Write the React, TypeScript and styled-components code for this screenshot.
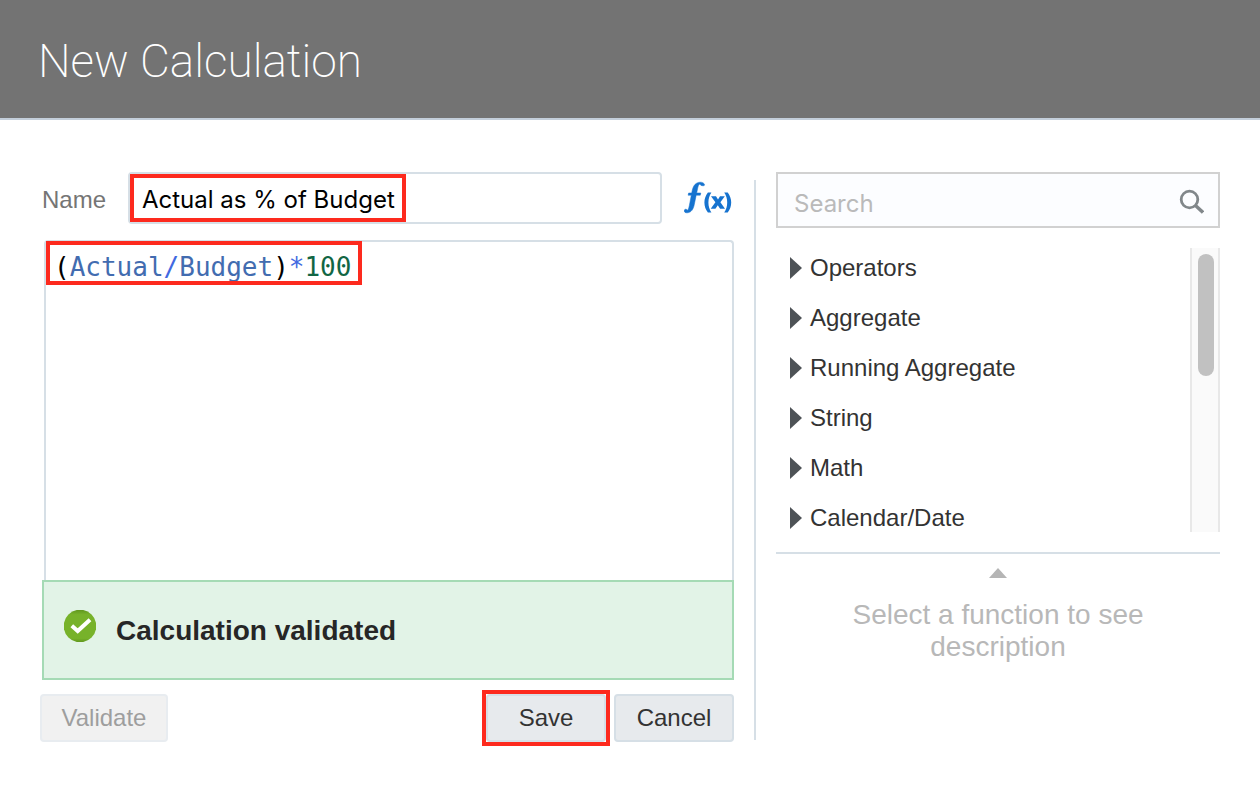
import React, { useState } from 'react';
import styled, { createGlobalStyle, css } from 'styled-components';

const GlobalStyle = createGlobalStyle`
  *, *::before, *::after { box-sizing: border-box; }
  body {
    margin: 0;
    background: #fff;
    color: #333;
    font-family: "Helvetica Neue", "Liberation Sans", Arial, sans-serif;
    font-size: 24px;
    line-height: 32px;
  }
  button, input, textarea { font: inherit; margin: 0; }
`;

const line = '#d6dfe6';

const Header = styled.header`
  display: flex;
  align-items: center;
  min-height: 120px;
  padding: 4px 38px 0;
  background: #737373;
  border-bottom: 2px solid #c3ceda;
`;

const Title = styled.h1`
  margin: 0;
  color: #fff;
  font-family: Roboto, sans-serif;
  font-size: 46px;
  font-weight: 200;
  line-height: 56px;
`;

const Body = styled.main`
  display: grid;
  grid-template-columns: minmax(0, 1fr) 2px minmax(0, 444px);
  column-gap: 20px;
  padding: 52px 40px 40px;
`;

const Divider = styled.div`
  margin: 8px 0 2px;
  background: ${line};
`;

const EditorPane = styled.form`
  display: flex;
  flex-direction: column;
`;

const NameRow = styled.div`
  display: flex;
  align-items: center;
  height: 52px;
  padding-left: 2px;
`;

const NameLabel = styled.label`
  width: 86px;
  padding-top: 4px;
  color: #757575;
`;

const NameField = styled.div`
  position: relative;
  flex: 1;
`;

const NameInput = styled.input`
  display: block;
  width: 100%;
  height: 52px;
  padding: 2px 12px 0;
  border: 2px solid ${line};
  border-radius: 4px;
  background: #fff;
  color: #000;
  font-family: Inter, sans-serif;
  font-size: 24px;
  outline: none;
`;

const Highlight = styled.span<{ $area: 'name' | 'formula' | 'save' }>`
  position: absolute;
  border: 4px solid #fd2a1e;
  pointer-events: none;
  ${({ $area }) => $area === 'name' && css`inset: 2px auto 2px 2px; width: 276px;`}
  ${({ $area }) => $area === 'formula' && css`top: -1px; left: 0; width: 316px; height: 44px;`}
  ${({ $area }) => $area === 'save' && css`inset: -4px;`}
`;

const FunctionButton = styled.button`
  display: flex;
  justify-content: flex-end;
  width: 72px;
  padding: 2px 2px 0 0;
  border: 0;
  background: none;
  cursor: pointer;
`;

const FormulaBox = styled.div`
  position: relative;
  min-height: 340px;
  margin: 16px 0 0 4px;
  border: 2px solid ${line};
  border-bottom: 0;
  border-radius: 4px 4px 0 0;
`;

const Formula = styled.code`
  display: block;
  padding: 6px 8px;
  color: #000;
  font-family: "DejaVu Sans Mono", monospace;
  font-size: 26px;
  line-height: 38px;
  outline: none;
`;

const Token = styled.span<{ $kind: 'column' | 'operator' | 'number' }>`
  color: ${({ $kind }) => ({ column: '#426cb0', operator: '#4169e1', number: '#116644' })[$kind]};
`;

const Message = styled.div`
  display: flex;
  align-items: center;
  gap: 20px;
  height: 100px;
  margin-left: 2px;
  padding: 2px 20px 0;
  border: 2px solid #a5dab5;
  background: #e2f3e7;
  color: #262626;
  font-size: 28px;
  font-weight: 700;
`;

const StatusIcon = styled.svg`
  flex: none;
  margin-bottom: 10px;
`;

const Actions = styled.div`
  display: flex;
  gap: 8px;
  margin-top: 14px;
`;

const ActionSlot = styled.span<{ $push?: boolean }>`
  position: relative;
  margin-right: ${({ $push }) => ($push ? 'auto' : '0')};
`;

const ActionButton = styled.button<{ $wide?: boolean }>`
  display: block;
  min-width: ${({ $wide }) => ($wide ? '128px' : '120px')};
  height: 48px;
  padding: 0 16px;
  border: 2px solid ${line};
  border-radius: 4px;
  background: #e7eaed;
  color: #333;
  cursor: pointer;

  &:disabled {
    border-color: #e8ecf0;
    background: #f1f1f1;
    color: #9e9e9e;
    cursor: default;
  }
`;

const FunctionPane = styled.aside`
  display: flex;
  flex-direction: column;
`;

const SearchBox = styled.label`
  display: flex;
  align-items: center;
  height: 56px;
  padding: 2px 14px 0 16px;
  border: 2px solid #d1d1d1;
  background: #fcfdff;
`;

const SearchInput = styled.input`
  flex: 1;
  min-width: 0;
  padding: 6px 0 0;
  border: 0;
  background: none;
  color: #333;
  font-family: Inter, sans-serif;
  font-size: 24px;
  outline: none;

  &::placeholder { color: #bababa; opacity: 1; }
`;

const ListArea = styled.div`
  display: flex;
  height: 284px;
  margin: 20px 0;
`;

const CategoryList = styled.ul`
  flex: 1;
  margin: 0;
  padding: 0 0 0 14px;
  overflow: hidden;
  list-style: none;
`;

const Category = styled.li`
  height: 50px;
`;

const CategoryButton = styled.button`
  display: flex;
  align-items: center;
  gap: 8px;
  width: 100%;
  height: 40px;
  padding: 0;
  border: 0;
  background: none;
  color: #333;
  text-align: left;
  cursor: pointer;
`;

const ScrollTrack = styled.div`
  width: 30px;
  padding: 6px;
  border: solid #e8e8e8;
  border-width: 0 2px;
  background: #fafafa;
`;

const ScrollThumb = styled.div`
  width: 16px;
  height: 122px;
  border-radius: 8px;
  background: #c1c1c1;
`;

const Description = styled.section`
  display: flex;
  flex-direction: column;
  align-items: center;
  gap: 21px;
  padding-top: 14px;
  border-top: 2px solid ${line};
  color: #b8b8b8;
`;

const Hint = styled.p`
  max-width: 320px;
  margin: 0;
  font-size: 28px;
  line-height: 32px;
  text-align: center;
`;

const categories = ['Operators', 'Aggregate', 'Running Aggregate', 'String', 'Math', 'Calendar/Date'];

function FxIcon() {
  return (
    <svg width="48" height="40" viewBox="0 0 48 40" fill="#1673cf" aria-hidden="true">
      <path d="M20.6 5.800c-.5-1.900-2.300-2.700-4.500-2.600-4.400.2-6.800 3.300-7.900 8.300l-.5 2.500H4.600l-.5 2.200h3.200L5.400 26.200c-.6 3.200-1.300 4.800-2.200 5.100-.3-1.600-2.900-1.500-3 .4-.1 1.500 1.300 2.300 3.100 2.100 4-.4 6-3.300 7-8.300l1.900-9.300h4.100l.5-2.200h-4.100l.8-4c.6-3 1.200-4.700 2.500-5.100.4 2.200 4.700 2.400 4.600.9z" stroke="#1673cf" strokeWidth=".5" />
      <path d="M20.400 23.500c0-4 1.300-7.200 3.500-10.100h3.500c-2 3.100-3 6.300-3 10.100s1 7 3 10.100h-3.500c-2.200-2.900-3.500-6.100-3.500-10.100zM47.200 23.500c0-4-1.300-7.200-3.500-10.100h-3.500c2 3.100 3 6.300 3 10.100s-1 7-3 10.100h3.500c2.200-2.900 3.500-6.100 3.500-10.100z" />
      <path d="M27 17.300h5l2 3.300 2-3.300h4.800l-4.400 6 4.600 6.400h-4.900l-2.300-3.500-2.400 3.500h-4.700l4.700-6.400z" />
    </svg>
  );
}

function CheckIcon() {
  return (
    <StatusIcon width="32" height="32" viewBox="0 0 32 32" aria-hidden="true">
      <defs>
        <linearGradient id="green" x1="0" y1="0" x2="0" y2="1">
          <stop offset="0" stopColor="#5f951d" />
          <stop offset=".15" stopColor="#77b22a" />
          <stop offset=".88" stopColor="#77b22a" />
          <stop offset="1" stopColor="#5f951d" />
        </linearGradient>
      </defs>
      <circle cx="16" cy="16" r="16.300" fill="url(#green)" />
      <path d="M7.800 15.800l5.900 5.200L26 9.800" fill="none" stroke="#fff" strokeWidth="4" />
    </StatusIcon>
  );
}

export default function App() {
  const [name, setName] = useState('Actual as % of Budget');
  const [query, setQuery] = useState('');
  return (
    <>
      <GlobalStyle />
      <Header><Title>New Calculation</Title></Header>
      <Body>
        <EditorPane onSubmit={(e: React.FormEvent) => e.preventDefault()}>
          <NameRow>
            <NameLabel htmlFor="calc-name">Name</NameLabel>
            <NameField>
              <NameInput id="calc-name" value={name} onChange={(e) => setName(e.target.value)} />
              <Highlight $area="name" />
            </NameField>
            <FunctionButton type="button" aria-label="Insert function"><FxIcon /></FunctionButton>
          </NameRow>
          <FormulaBox>
            <Formula>
              (<Token $kind="column">Actual</Token><Token $kind="operator">/</Token><Token $kind="column">Budget</Token>)<Token $kind="operator">*</Token><Token $kind="number">100</Token>
            </Formula>
            <Highlight $area="formula" />
          </FormulaBox>
          <Message role="status"><CheckIcon />Calculation validated</Message>
          <Actions>
            <ActionSlot $push><ActionButton type="button" $wide disabled>Validate</ActionButton></ActionSlot>
            <ActionSlot><ActionButton type="submit">Save</ActionButton><Highlight $area="save" /></ActionSlot>
            <ActionSlot><ActionButton type="button">Cancel</ActionButton></ActionSlot>
          </Actions>
        </EditorPane>
        <Divider />
        <FunctionPane>
          <SearchBox>
            <SearchInput type="text" aria-label="Search" placeholder="Search" value={query} onChange={(e) => setQuery(e.target.value)} />
            <svg width="26" height="26" viewBox="0 0 26 26" fill="none" stroke="#81878a" aria-hidden="true">
              <circle cx="11.500" cy="11.500" r="8.300" strokeWidth="2.800" />
              <path d="M17.500 17.500l7.500 7" strokeWidth="3.400" />
            </svg>
          </SearchBox>
          <ListArea>
            <CategoryList>
              {categories.map((category) => (
                <Category key={category}>
                  <CategoryButton type="button">
                    <svg width="12" height="22" viewBox="0 0 12 22" aria-hidden="true"><path d="M0 0l12 11L0 22z" fill="#4d5256" /></svg>
                    {category}
                  </CategoryButton>
                </Category>
              ))}
            </CategoryList>
            <ScrollTrack><ScrollThumb /></ScrollTrack>
          </ListArea>
          <Description>
            <svg width="18" height="10" viewBox="0 0 18 10" aria-hidden="true"><path d="M0 10l9-10 9 10z" fill="#b5b5b5" /></svg>
            <Hint>Select a function to see description</Hint>
          </Description>
        </FunctionPane>
      </Body>
    </>
  );
}
